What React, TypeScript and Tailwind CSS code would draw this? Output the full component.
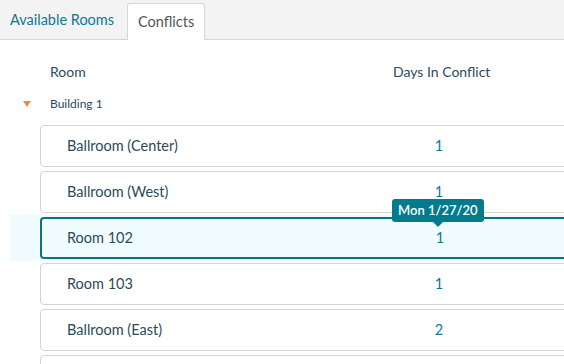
import React from "react";

const rows = [
  { name: "Ballroom (Center)", days: 1 },
  { name: "Ballroom (West)", days: 1 },
  { name: "Room 102", days: 1, selected: true, tip: "Mon 1/27/20" },
  { name: "Room 103", days: 1 },
  { name: "Ballroom (East)", days: 2 },
  { name: "", days: null },
];

export default function App() {
  return (
    <div
      className="w-[564px] h-[364px] overflow-hidden bg-white text-[#2c4a5b]"
      style={{ fontFamily: "Lato, 'Open Sans', sans-serif" }}
    >
      {/* tabs */}
      <div className="h-[40px] bg-[#f3f3f3] border-b border-[#d6d6d6] flex items-end pl-[10px]">
        <div className="h-[39px] flex items-center pr-[13px] text-[14.5px] text-[#0b7a8f]">
          Available Rooms
        </div>
        <div className="h-[37px] -mb-px px-[10px] flex items-center bg-white border border-b-0 border-[#d6d6d6] rounded-t-[3px] text-[14.5px] text-[#555]">
          Conflicts
        </div>
      </div>

      {/* header */}
      <div className="flex items-center h-[42px] pt-[20px] pl-[50px] text-[14px]">
        <div className="w-[343px]">Room</div>
        <div>Days In Conflict</div>
      </div>

      {/* group */}
      <div className="flex items-center h-[24px] mt-[10px] text-[12px]">
        <div className="w-[50px] pl-[23px] flex">
          <svg width="8" height="6" viewBox="0 0 8 6">
            <path d="M0 0 H8 L4 6 Z" fill="#f0874a" />
          </svg>
        </div>
        <div>Building 1</div>
      </div>

      <div className="pt-[7px]">
        {rows.map((r, i) => (
          <div
            key={i}
            className={
              "py-[2px] " + (r.selected ? "ml-[10px] pl-[30px] bg-[#f0fbfe]" : "pl-[40px]")
            }
          >
            <div
              className={
                "relative w-[600px] h-[42px] flex items-center text-[14.5px] rounded-[4px] " +
                (r.selected
                  ? "border-2 border-[#0b7285] pl-[25px]"
                  : "border border-[#d4d4d4] bg-white pl-[26px]")
              }
            >
              <div className={r.selected ? "w-[347px]" : "w-[346px]"}>{r.name}</div>
              <div className="w-[52px] text-center text-[#0b7a8f]">{r.days}</div>
              {r.tip && (
                <div className="absolute left-[350px] top-[-20px] flex flex-col items-center">
                  <div className="h-[23px] px-[6px] flex items-center rounded-[3px] bg-[#037a8e] text-white text-[13px] font-semibold">
                    {r.tip}
                  </div>
                  <div className="w-0 h-0 border-l-[5px] border-r-[5px] border-t-[5px] border-l-transparent border-r-transparent border-t-[#037a8e]" />
                </div>
              )}
            </div>
          </div>
        ))}
      </div>
    </div>
  );
}
